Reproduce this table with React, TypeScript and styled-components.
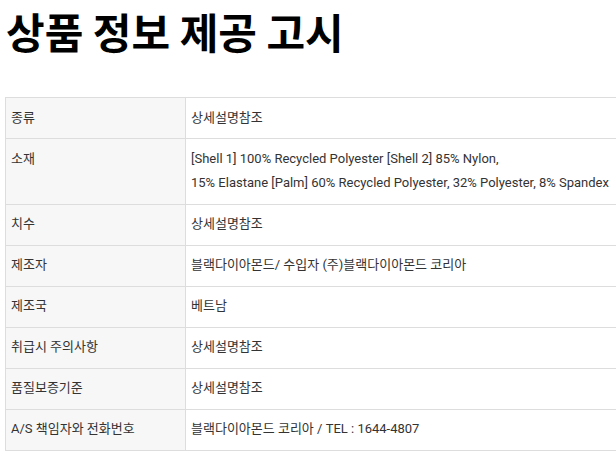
import React from "react";
import styled, { createGlobalStyle } from "styled-components";

const Global = createGlobalStyle`
  html, body { margin: 0; padding: 0; background: #fff; overflow: hidden; }
  body { font-family: Roboto, "Noto Sans CJK KR", sans-serif; color: #222; }
`;

const Page = styled.div`
  padding: 6px 0 0 5px;
  width: 611px;
  overflow: hidden;
`;

const Title = styled.h1`
  margin: 0 0 0 1px;
  font-family: "Noto Sans CJK KR", sans-serif;
  font-size: 42px;
  font-weight: 700;
  line-height: 50px;
  color: #000;
`;

const Table = styled.table`
  margin-top: 41px;
  width: 700px;
  border-collapse: collapse;
  font-size: 13px;
  line-height: 24.8px;
`;

const Row = styled.tr``;

const Label = styled.th`
  width: 169px;
  padding: 7.6px 5px;
  background: #f7f7f7;
  border: 1px solid #ddd;
  text-align: left;
  vertical-align: top;
  font-weight: 400;
  color: #333;
`;

const Value = styled.td`
  padding: 7.6px 5px;
  border: 1px solid #ddd;
  vertical-align: top;
  color: #333;
`;

const rows: [string, React.ReactNode][] = [
  ["종류", "상세설명참조"],
  [
    "소재",
    <>
      [Shell 1] 100% Recycled Polyester [Shell 2] 85% Nylon,
      <br />
      15% Elastane [Palm] 60% Recycled Polyester, 32% Polyester, 8% Spandex
    </>,
  ],
  ["치수", "상세설명참조"],
  ["제조자", "블랙다이아몬드/ 수입자 (주)블랙다이아몬드 코리아"],
  ["제조국", "베트남"],
  ["취급시 주의사항", "상세설명참조"],
  ["품질보증기준", "상세설명참조"],
  ["A/S 책임자와 전화번호", "블랙다이아몬드 코리아 / TEL : 1644-4807"],
];

export default function App() {
  return (
    <>
      <Global />
      <Page>
        <Title>상품 정보 제공 고시</Title>
        <Table>
          <tbody>
            {rows.map(([k, v]) => (
              <Row key={k}>
                <Label>{k}</Label>
                <Value>{v}</Value>
              </Row>
            ))}
          </tbody>
        </Table>
      </Page>
    </>
  );
}
